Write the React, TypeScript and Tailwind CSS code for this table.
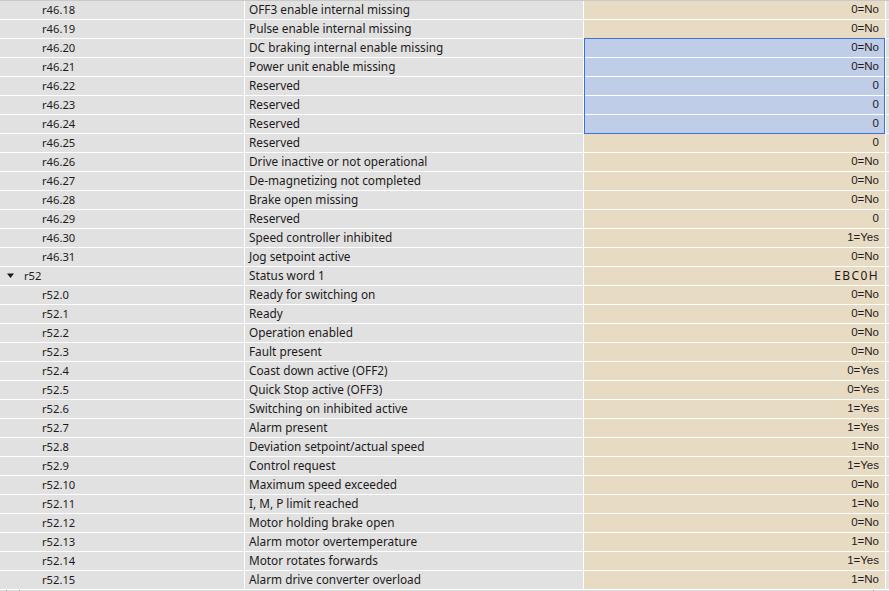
import React from "react"

type Row = {
  id: string
  text: string
  value: string
  level: 0 | 1
  open?: boolean
  sans?: boolean
}

const rows: Row[] = [
  { id: "r46.18", text: "OFF3 enable internal missing", value: "0=No", level: 1 },
  { id: "r46.19", text: "Pulse enable internal missing", value: "0=No", level: 1 },
  { id: "r46.20", text: "DC braking internal enable missing", value: "0=No", level: 1 },
  { id: "r46.21", text: "Power unit enable missing", value: "0=No", level: 1 },
  { id: "r46.22", text: "Reserved", value: "0", level: 1 },
  { id: "r46.23", text: "Reserved", value: "0", level: 1 },
  { id: "r46.24", text: "Reserved", value: "0", level: 1 },
  { id: "r46.25", text: "Reserved", value: "0", level: 1 },
  { id: "r46.26", text: "Drive inactive or not operational", value: "0=No", level: 1 },
  { id: "r46.27", text: "De-magnetizing not completed", value: "0=No", level: 1 },
  { id: "r46.28", text: "Brake open missing", value: "0=No", level: 1 },
  { id: "r46.29", text: "Reserved", value: "0", level: 1 },
  { id: "r46.30", text: "Speed controller inhibited", value: "1=Yes", level: 1 },
  { id: "r46.31", text: "Jog setpoint active", value: "0=No", level: 1 },
  { id: "r52", text: "Status word 1", value: "EBC0H", level: 0, open: true, sans: true },
  { id: "r52.0", text: "Ready for switching on", value: "0=No", level: 1 },
  { id: "r52.1", text: "Ready", value: "0=No", level: 1 },
  { id: "r52.2", text: "Operation enabled", value: "0=No", level: 1 },
  { id: "r52.3", text: "Fault present", value: "0=No", level: 1 },
  { id: "r52.4", text: "Coast down active (OFF2)", value: "0=Yes", level: 1 },
  { id: "r52.5", text: "Quick Stop active (OFF3)", value: "0=Yes", level: 1 },
  { id: "r52.6", text: "Switching on inhibited active", value: "1=Yes", level: 1 },
  { id: "r52.7", text: "Alarm present", value: "1=Yes", level: 1 },
  { id: "r52.8", text: "Deviation setpoint/actual speed", value: "1=No", level: 1 },
  { id: "r52.9", text: "Control request", value: "1=Yes", level: 1 },
  { id: "r52.10", text: "Maximum speed exceeded", value: "0=No", level: 1 },
  { id: "r52.11", text: "I, M, P limit reached", value: "1=No", level: 1 },
  { id: "r52.12", text: "Motor holding brake open", value: "0=No", level: 1 },
  { id: "r52.13", text: "Alarm motor overtemperature", value: "1=No", level: 1 },
  { id: "r52.14", text: "Motor rotates forwards", value: "1=Yes", level: 1 },
  { id: "r52.15", text: "Alarm drive converter overload", value: "1=No", level: 1 },
]

// rows 2..6 are the marked block in the value column
const selected = (i: number) => i >= 2 && i <= 6

const ui = "font-['Noto_Sans',sans-serif]"

const ParamRow = ({ row, index }: { row: Row; index: number }) => (
  <div className="flex h-[19px] border-b border-white">
    <div className={`flex w-[245px] shrink-0 items-center border-r border-white text-[11.2px] ${ui} ${row.level === 0 ? "pl-[7px]" : "pl-[42px]"}`}>
      {row.open && (
        <svg width="8" height="6" viewBox="0 0 8 6" className="mr-[9px]">
          <path d="M0 0.5 L7 0.5 L3.5 5 Z" fill="#1a1a1a" />
        </svg>
      )}
      {row.id}
    </div>
    <div className={`flex w-[339px] shrink-0 items-center border-r border-white pl-[4px] text-[11.8px] ${ui}`}>{row.text}</div>
    <div
      className={`flex w-[302px] shrink-0 items-center justify-end border-r border-white pr-[6px] ${
        selected(index) ? "bg-[#bfcde8]" : "bg-[#e8dbc4]"
      } ${row.sans ? `${ui} text-[12px] tracking-[1.4px]` : "font-['Liberation_Sans',Arial,sans-serif] text-[11.5px]"}`}
    >
      {row.value}
    </div>
    <div className="flex-1" />
  </div>
)

export default function App() {
  return (
    <div className="relative h-[591px] w-[889px] overflow-hidden bg-[#e1e1e1] text-[#1e1a1a]">
      <div className="border-t border-[#c9c9c9]">
        {rows.map((r, i) => (
          <ParamRow key={r.id} row={r} index={i} />
        ))}
      </div>
      <div className="flex h-[2px] bg-[#dcdcdc]">
        <div className="ml-[6px] w-px bg-[#9a9a9a]" />
        <div className="ml-[12px] w-px bg-[#9a9a9a]" />
        <div className="ml-[853px] w-px bg-[#9a9a9a]" />
      </div>
      <div className="pointer-events-none absolute left-[584px] top-[38px] h-[96px] w-[301px] border border-[#3a74d8]" />
    </div>
  )
}
